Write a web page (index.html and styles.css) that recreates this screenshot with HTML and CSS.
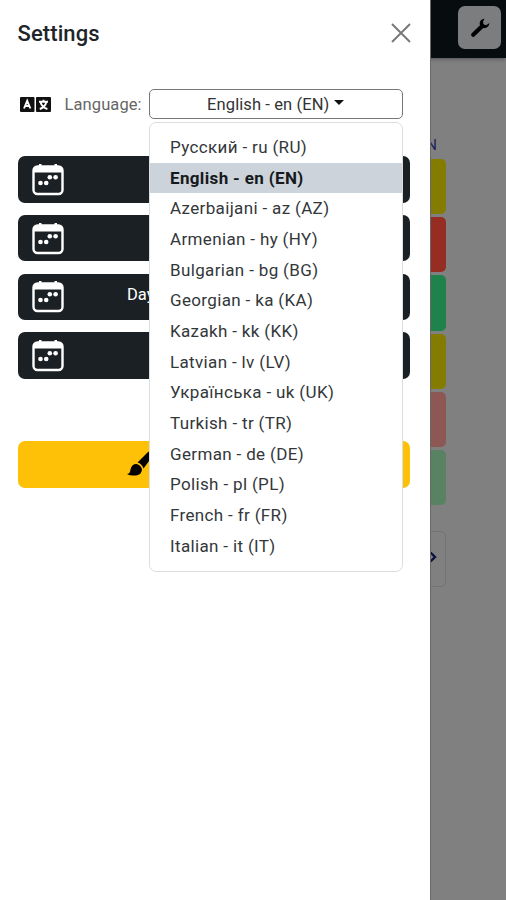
FILE: index.html
```
<!DOCTYPE html>
<html lang="en">
<head>
<meta charset="utf-8">
<title>Settings</title>
<link rel="stylesheet" href="styles.css">
</head>
<body>
<div class="page">
  <header class="topbar">
    <button class="tool" aria-label="Settings"><svg width="20" height="20" viewBox="0 0 20 20"><path class="handle" d="M3.200 16.800 12 8.200"/><path d="M14.500.8c-3 .2-5.200 2.500-4.700 5.600l.7 3.100 3 .6c3.200.3 5.600-1.700 5.900-5.200l-3.200 2.300-2.700-1-.5-2.400z"/></svg></button>
  </header>
  <main class="board">
    <div class="heading">N</div>
    <div class="tile yellow"></div>
    <div class="tile red"></div>
    <div class="tile green"></div>
    <div class="tile yellow"></div>
    <div class="tile rose"></div>
    <div class="tile mint"></div>
    <div class="pager"><svg width="8" height="12" viewBox="0 0 8 12"><path d="M1.500 1.500 6 6l-4.500 4.500"/></svg></div>
  </main>
</div>
<aside class="drawer">
  <div class="drawer-head">
    <h1>Settings</h1>
    <svg class="close" width="20" height="20" viewBox="0 0 20 20"><path d="M1 1l18 18M19 1 1 19"/></svg>
  </div>
  <div class="language">
    <svg class="lang-icon" width="31" height="15" viewBox="0 0 31 15"><rect width="14.500" height="15" rx="1"/><rect x="16" width="15" height="15" rx="1"/><path d="M4 11.500 7.200 3.800l3.200 7.700M5.200 9h4M19 4.700h9M23.500 2.800v1.900M26.300 5c-.6 3.300-3 5.700-6.500 7M20.700 5.500c.8 3.300 3 5.400 6.700 6.500"/></svg>
    <span class="label">Language:</span>
    <div class="picker">
      <button class="select"><span>English - en (EN)</span><i class="caret"></i></button>
      <ul class="menu">
        <li>Русский - ru (RU)</li>
        <li class="active">English - en (EN)</li>
        <li>Azerbaijani - az (AZ)</li>
        <li>Armenian - hy (HY)</li>
        <li>Bulgarian - bg (BG)</li>
        <li>Georgian - ka (KA)</li>
        <li>Kazakh - kk (KK)</li>
        <li>Latvian - lv (LV)</li>
        <li>Українська - uk (UK)</li>
        <li>Turkish - tr (TR)</li>
        <li>German - de (DE)</li>
        <li>Polish - pl (PL)</li>
        <li>French - fr (FR)</li>
        <li>Italian - it (IT)</li>
      </ul>
    </div>
  </div>
  <svg class="defs" width="0" height="0"><symbol id="cal" viewBox="0 0 32 33"><rect x="1.500" y="3.500" width="29" height="27.500" rx="4" fill="none" stroke="#fff" stroke-width="2.400"/><path d="M1.500 9.500V7a4 4 0 0 1 4-4H7V1h2.500v2h13V1H25v2h1.500a4 4 0 0 1 4 4v2.500z" fill="#fff"/><g fill="#fff"><circle cx="8.500" cy="20" r="2.300"/><circle cx="14.200" cy="20" r="2.300"/><circle cx="17.800" cy="14.300" r="2.300"/><circle cx="23.600" cy="14.300" r="2.300"/></g></symbol></svg>
  <div class="dates">
    <button class="date"><svg width="32" height="33"><use href="#cal"/></svg></button>
    <button class="date"><svg width="32" height="33"><use href="#cal"/></svg></button>
    <button class="date"><svg width="32" height="33"><use href="#cal"/></svg><span>Day</span></button>
    <button class="date"><svg width="32" height="33"><use href="#cal"/></svg></button>
  </div>
  <button class="theme"><svg width="26" height="26" viewBox="0 0 26 26"><path d="M10.500 11.500 21 1c1.500-1 3.500-.5 4 .5S25.700 5 25 6l-8.500 11.500c-.8-3-3-5.300-6-6z"/><path d="M9.500 13c3 .7 5 2.500 5.500 5.500-.5 4.500-3.500 6-7.500 6-3 0-6-.3-7.500-1.500 3-.6 3-2 3.500-4.500.7-3.500 2.500-5.500 6-5.500z"/></svg></button>
</aside>
</body>
</html>
```
FILE: styles.css
```
* { box-sizing: border-box; }
body {
  margin: 0;
  height: 900px;
  position: relative;
  overflow: hidden;
  background: #808080;
  font-family: Roboto, "Liberation Sans", sans-serif;
  font-size: 16.5px;
  color: #212529;
}
button { font: inherit; padding: 0; border: 0; }
.topbar {
  height: 58px;
  padding: 6px 5px 0 0;
  display: flex;
  justify-content: flex-end;
  align-items: flex-start;
  background: #070c0e;
  box-shadow: 0 1px 4px rgba(0, 0, 0, .35);
}
.tool {
  width: 43px;
  height: 43px;
  border-radius: 7px;
  background: #7c7d7e;
  display: grid;
  place-items: center;
}
.tool .handle { fill: none; stroke: #000; stroke-width: 4.2; stroke-linecap: round; }
.board { padding: 78px 60px 0 17px; display: flex; flex-direction: column; gap: 3px; }
.heading {
  height: 20px;
  padding-right: 9px;
  text-align: right;
  font-size: 15px;
  color: #1d2260;
}
.tile { height: 55.2px; border-radius: 5px; }
.yellow { background: #847c00; }
.red { background: #962d22; }
.green { background: #1f824a; }
.rose { background: #8d5853; }
.mint { background: #598263; }
.pager {
  height: 56px;
  margin-top: 23px;
  padding: 0 8px 5px 0;
  border: 1px solid #727375;
  border-radius: 5px;
  display: flex;
  justify-content: flex-end;
  align-items: center;
}
.pager path { fill: none; stroke: #0b103f; stroke-width: 2.4; }
.drawer {
  position: absolute;
  inset: 0 auto 0 0;
  width: 431px;
  padding: 0 20px 0 17.5px;
  background: #fff;
  border-right: 1px solid #686868;
}
.drawer-head {
  height: 66px;
  display: flex;
  align-items: center;
  justify-content: space-between;
}
h1 { margin: 0; font-size: 22px; font-weight: 500; letter-spacing: .1px; }
.close { fill: none; stroke: #777; stroke-width: 1.9; margin-right: -1px; }
.language {
  margin-top: 23px;
  height: 30px;
  padding-right: 7px;
  display: flex;
  align-items: center;
}
.lang-icon { margin: 0 14px 0 2px; fill: #111; }
.lang-icon path { fill: none; stroke: #fff; stroke-width: 1.9; }
.label { width: 84px; color: #666; letter-spacing: .1px; white-space: nowrap; }
.picker { position: relative; flex: 1; height: 30px; }
.select {
  width: 100%;
  height: 30px;
  display: flex;
  align-items: center;
  justify-content: center;
  gap: 5px;
  background: #fff;
  border: 1px solid #777;
  border-radius: 5px;
  color: #333;
  letter-spacing: .1px;
}
.caret {
  border: 5px solid transparent;
  border-top-color: #111;
  border-bottom: 0;
  margin-bottom: 3px;
}
.menu {
  position: absolute;
  top: 33px;
  left: 0;
  width: 254px;
  height: 450px;
  margin: 0;
  padding: 9px 0;
  list-style: none;
  background: #fff;
  border: 1px solid #dcdddf;
  border-radius: 7px;
  z-index: 1;
}
.menu li {
  height: 30.67px;
  line-height: 30px;
  padding-left: 20.5px;
  font-size: 17px;
  color: #33373a;
  letter-spacing: .35px;
  white-space: nowrap;
}
.menu .active { background: #ccd3da; color: #16191c; font-weight: 700; }
.defs { position: absolute; }
.dates { margin-top: 37.2px; display: flex; flex-direction: column; gap: 12.3px; }
.date {
  height: 46.4px;
  padding-left: 14.5px;
  border-radius: 7px;
  background: #1a2023;
  color: #fff;
  display: flex;
  align-items: center;
}
.date span { margin: 0 0 4px 63px; }
.theme {
  width: 100%;
  height: 46.500px;
  margin-top: 62.500px;
  padding-left: 109px;
  border-radius: 7px;
  background: #ffc107;
  display: flex;
  align-items: center;
}
```
